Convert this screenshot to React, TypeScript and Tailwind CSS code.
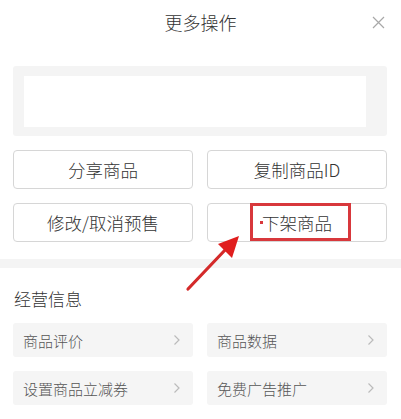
import React from "react";

const font = { fontFamily: '"Noto Sans CJK SC", "Noto Sans", sans-serif' };

function Chevron() {
  return (
    <svg width="8" height="12" viewBox="0 0 8 12" fill="none">
      <path d="M1.5 1.5 L6 6 L1.5 10.5" stroke="#bbbbbb" strokeWidth="1.2" />
    </svg>
  );
}

function Cell({ label }: { label: string }) {
  return (
    <div className="h-[34px] bg-[#f5f5f5] rounded-[3px] flex items-center justify-between pl-[10px] pr-[12px]">
      <span className="text-[15px] text-[#555555] leading-none font-light">{label}</span>
      <Chevron />
    </div>
  );
}

function Btn({ label }: { label: string }) {
  return (
    <div className="h-[39px] border border-[#d6d6d6] rounded-[4px] flex items-center justify-center">
      <span className="text-[17.5px] text-[#333333] leading-none font-light">{label}</span>
    </div>
  );
}

export default function App() {
  return (
    <div className="relative w-[401px] h-[419px] bg-white overflow-hidden" style={font}>
      <div className="relative h-[66px] flex justify-center pt-[11px]">
        <span className="text-[18px] text-[#333333] leading-[22px] font-light">更多操作</span>
        <svg className="absolute left-[372px] top-[16px]" width="13" height="13" viewBox="0 0 13 13">
          <path d="M1 1 L12 12 M12 1 L1 12" stroke="#a8a8a8" strokeWidth="1.2" />
        </svg>
      </div>
      <div className="mx-[13px] w-[374px] h-[70px] bg-[#f4f4f4] rounded-[3px] pt-[10px] pl-[11px]">
        <div className="w-[342px] h-[51px] bg-white" />
      </div>
      <div className="mx-[13px] w-[374px] mt-[14px] grid grid-cols-2 gap-x-[14px] gap-y-[14px]">
        <Btn label="分享商品" />
        <Btn label="复制商品ID" />
        <Btn label="修改/取消预售" />
        <Btn label="下架商品" />
      </div>
      <div className="mt-[17px] h-[9px] bg-[#f4f4f4]" />
      <div className="px-[14px] pt-[19px] h-[55px]">
        <span className="text-[17px] text-[#333333] leading-[22px] font-light">经营信息</span>
      </div>
      <div className="mx-[13px] w-[374px] grid grid-cols-2 gap-x-[14px] gap-y-[14px]">
        <Cell label="商品评价" />
        <Cell label="商品数据" />
        <Cell label="设置商品立减券" />
        <Cell label="免费广告推广" />
      </div>

      {/* annotation: red box */}
      <div className="absolute left-[250px] top-[203px] w-[101px] h-[38px] border-[3px] border-[#d8383c]" />
      <div className="absolute left-[260px] top-[221px] w-[3px] h-[3px] bg-[#d8383c]" />
      {/* annotation: arrow */}
      <svg className="absolute left-0 top-0 pointer-events-none" width="401" height="419">
        <line x1="188" y1="289" x2="226" y2="249" stroke="#d42a2a" strokeWidth="3.2" strokeLinecap="round" />
        <polygon points="239,236 218,244 232,258" fill="#e01e1e" />
      </svg>
    </div>
  );
}
